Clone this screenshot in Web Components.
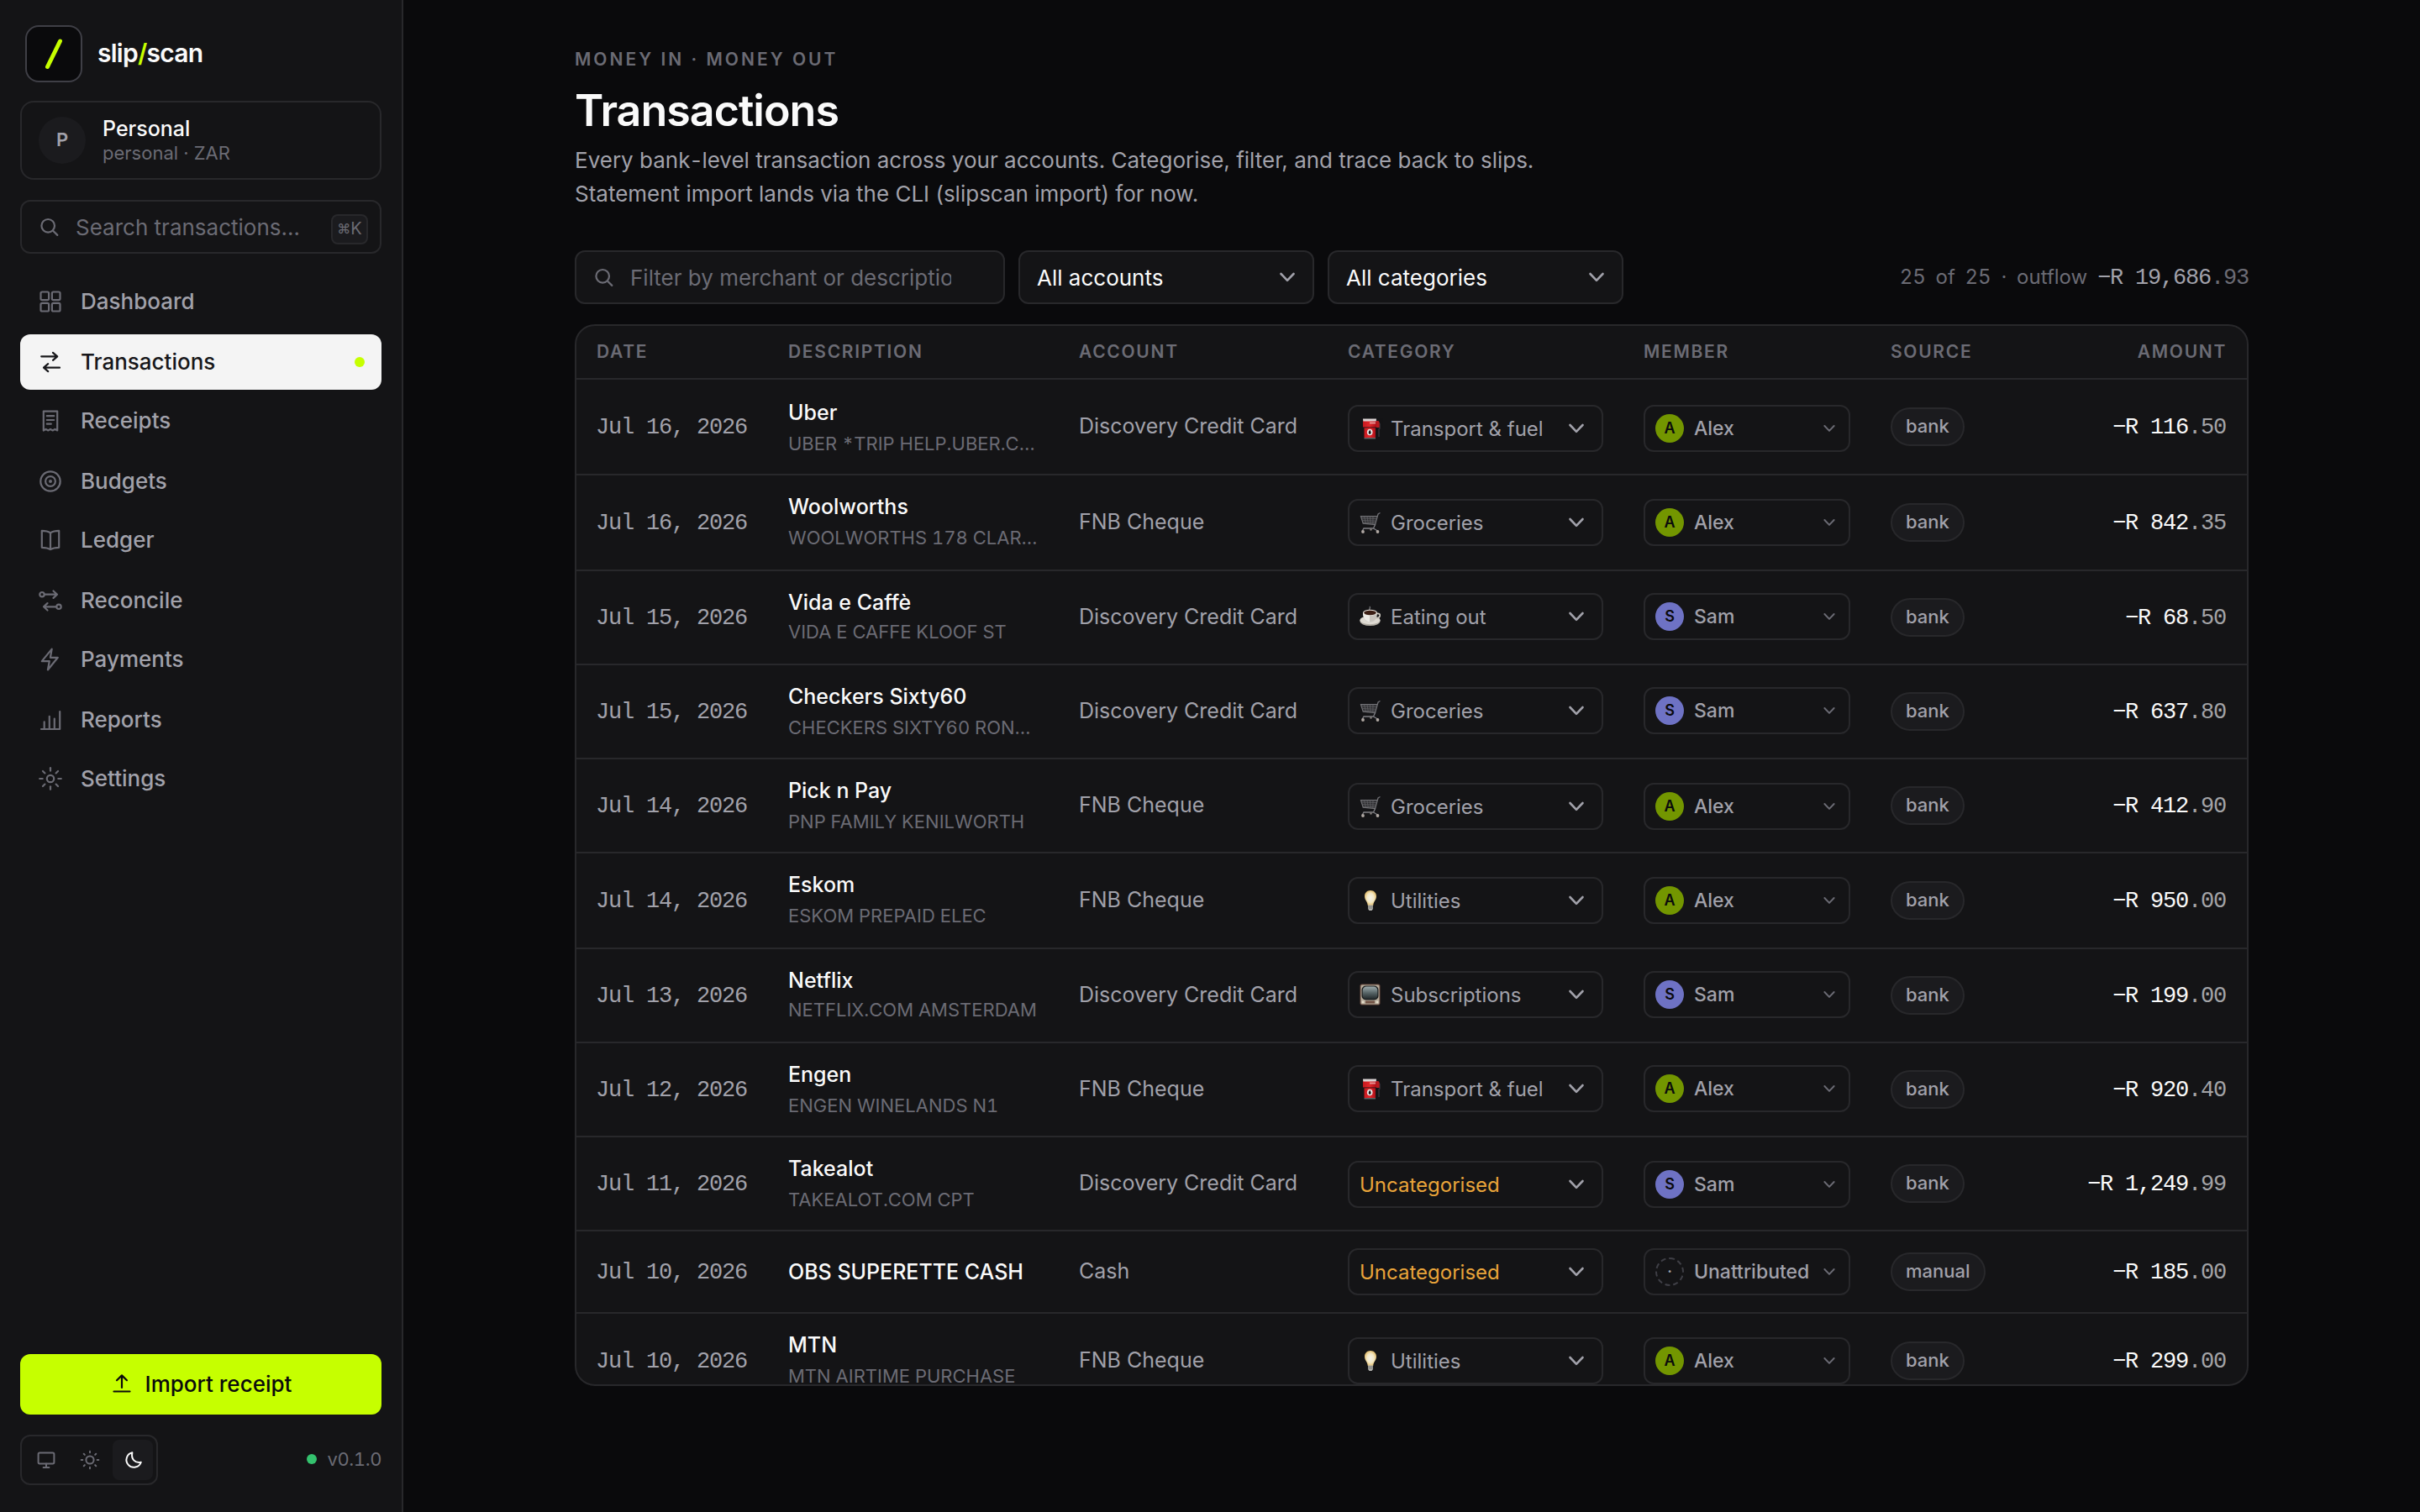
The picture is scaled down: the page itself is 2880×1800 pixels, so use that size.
<!DOCTYPE html>
<html lang="en">
<head>
<meta charset="utf-8">
<title>slip/scan - Transactions</title>
<style>
    html, body {
        margin: 0;
        height: 100%;
        background: #0a0a0c;
    }

    body {
        --bg: #0a0a0c;
        --panel: #141416;
        --raised: #1b1b1e;
        --line: #28282b;
        --text: #fafafa;
        --soft: #a1a1aa;
        --muted: #6b6b74;
        --accent: #c6ff00;
        --mono: "Liberation Mono", monospace;
        display: flex;
        font-family: Inter, "Liberation Sans", sans-serif;
        font-size: 26px;
        color: var(--text);
        overflow: hidden;
    }
</style>
</head>
<body>
<app-sidebar></app-sidebar>
<transactions-page></transactions-page>

<script>
const rays = (c, from, to) => [0, 45, 90, 135, 180, 225, 270, 315]
    .map(a => `<path d="M${c} ${c - from}V${c - to}" transform="rotate(${a} ${c} ${c})"/>`).join('');

const ICONS = {
    dashboard: '<rect x="4.5" y="4.5" width="9.6" height="9.6" rx="1.6"/><rect x="17.9" y="4.5" width="9.6" height="9.6" rx="1.6"/><rect x="4.5" y="17.9" width="9.6" height="9.6" rx="1.6"/><rect x="17.9" y="17.9" width="9.6" height="9.6" rx="1.6"/>',
    transactions: '<path d="M5.2 9.3h19M19 4.8l5.2 4.5-5.2 4.5M27 22.7H8M13.2 18.2 8 22.7l5.2 4.5"/>',
    receipts: '<path d="M7.8 27.5V4.6h16.4v22.9l-2.8-1.6-2.7 1.6-2.7-1.6-2.7 1.6-2.7-1.6zM11.8 10.2h8.4M11.8 15h8.4M11.8 19.7h5"/>',
    budgets: '<circle cx="16" cy="16" r="11.7"/><circle cx="16" cy="16" r="5.9"/><circle cx="16" cy="16" r="1.2" fill="currentColor" stroke-width="1.6"/>',
    ledger: '<path d="M16 7.4C13 5.4 9 4.9 5.8 4.9v19.9c4 0 7.2.4 10.2 2.4 3-2 6.2-2.4 10.2-2.4V4.9C23 4.9 19 5.4 16 7.4zM16 7.4v19.8"/>',
    reconcile: '<circle cx="6" cy="8.7" r="2.7"/><path d="M9.5 8.7H24M19.5 4.5l4.5 4.2-4.5 4.2M22.5 23.3H8M12.5 19.1 8 23.3l4.5 4.2"/><circle cx="26" cy="23.3" r="2.7"/>',
    payments: '<path d="M17.7 3.6 5.8 18.1h9L12.9 28.5 24.8 13.8h-8.9z"/>',
    reports: '<path d="M5 27h22.2V6.2M8.7 27v-8.6M14.8 27V11.8M20.8 27V14.6"/>',
    settings: `<circle cx="16" cy="16" r="4.2"/>${rays(16, 9.3, 12.8)}`,
    search: '<circle cx="13.2" cy="14.8" r="7.8"/><path d="m18.9 20.5 5.4 5.4"/>',
    upload: '<path d="M16 21V6.6M10 12.2l6-5.8 6 5.8M6.5 25.5h19"/>',
    screen: '<rect x="6.6" y="7.6" width="18.8" height="12.8" rx="1.6"/><path d="M16 20.4v4.4M12.6 25h6.8"/>',
    sun: `<circle cx="16" cy="16" r="4.6"/>${rays(16, 8.7, 10.3)}`,
    moon: '<path d="M14.4 7.2a8.9 8.9 0 1 0 10.4 11.5c-3.6.7-6.6-.2-8.6-2.4-2-2.2-2.6-5.4-1.8-9.1z"/>',
    chevron: '<path d="m8.5 12 7.5 7.8 7.5-7.8"/>'
};

// small full colour pictures in front of the category names
const EMOJI = {
    fuel: `<defs><linearGradient id="g"><stop offset="0" stop-color="#cf1a20"/><stop offset=".5" stop-color="#f0282d"/><stop offset="1" stop-color="#b50f18"/></linearGradient></defs>
        <path d="M21 5l3 2.5V13l-1 1v9" fill="none" stroke="#34343a" stroke-width="1.6"/>
        <path d="M20 4h2.5l1.2 2v6H20z" fill="#c01b20"/>
        <path d="M4 1.5h16l-.5 5h-15z" fill="#e6dfdf"/><path d="M4 4.5h16v7H4z" fill="url(#g)"/>
        <path d="M12 5.5h7v2h-7z" fill="#f09a9a"/><path d="M5.5 12.3H19V24H5.5z" fill="url(#g)"/>
        <ellipse cx="12.2" cy="17.5" rx="3.3" ry="3.8" fill="#f5f2f2"/><path d="M12.2 14.8c2.4 3.5 1.3 5 0 5s-2.4-1.5 0-5z" fill="#111"/>
        <path d="M5.5 24H19v1.5H5.5z" fill="#66666a"/>`,
    cart: `<path d="M24.5 1.5 22 3l-3.4 12.5-14.4-1.3L1.5 5.5l19.8.2" fill="#2d2d30" stroke="#77777b" stroke-width="1.2"/>
        <path d="M2.3 8l18.2.5M3.2 10.5l16.6.8M4 13l15 .7M5.5 5.5l2 9M9 5.5l1.3 9M12.5 5.5l.6 9M16 5.5l-.2 9.5" stroke="#66666a" stroke-width=".8" fill="none"/>
        <path d="M18.6 15.5 16.5 20H5l-2 3.5M16.5 20l5 3" stroke="#85858a" stroke-width="1.3" fill="none"/>
        <circle cx="4" cy="24" r="1.9" fill="#b9b0ab"/><circle cx="21.5" cy="24" r="1.9" fill="#b9b0ab"/><circle cx="13.5" cy="21.5" r="1.2" fill="#8c8682"/>`,
    coffee: `<path d="M12 6c-2-2 2-2.500 0-5" stroke="#77777b" stroke-width="1.4" fill="none"/>
        <ellipse cx="12.5" cy="18.5" rx="12" ry="5.5" fill="#b9b4aa"/><ellipse cx="12.5" cy="17.3" rx="12" ry="5" fill="#e9e5dd"/>
        <path d="M20.5 9.5c6-1 4.5 6-1.5 5.5" stroke="#d8d3c9" stroke-width="1.7" fill="none"/>
        <path d="M4 8.5h17c0 6.5-3 11-8.500 11S4 15 4 8.5z" fill="#d2cec6"/><path d="M4 8.5h8v11C7 19 4 14 4 8.5z" fill="#f8f6f1"/>
        <ellipse cx="12.5" cy="8.3" rx="8.5" ry="3.6" fill="#f3efe8"/><ellipse cx="12.5" cy="8.5" rx="7.2" ry="2.7" fill="#3e1f14"/>`,
    bulb: `<defs><radialGradient id="b"><stop offset="0" stop-color="#fffef5"/><stop offset=".6" stop-color="#fff4cf"/><stop offset="1" stop-color="#efc977"/></radialGradient></defs>
        <path d="M13 1c4 0 7 2.8 7 6.9 0 4.5-3.4 6-3.8 11H9.8C9.4 13.9 6 12.4 6 7.9 6 3.800 9 1 13 1z" fill="url(#b)"/>
        <path d="M10 18.5h6V23l-1.5 2h-3L10 23z" fill="#b9b9b5"/><path d="M10 20h6M10 22h6" stroke="#6d6d6a" stroke-width=".8"/>`,
    tv: `<defs><linearGradient id="t" x2="0" y2="1"><stop offset="0" stop-color="#a4b4b6"/><stop offset=".5" stop-color="#5c6a6c"/><stop offset="1" stop-color="#22292b"/></linearGradient></defs>
        <rect x=".5" y=".5" width="24" height="25" rx="2" fill="#6e4e42"/><rect x="1.5" y="1.5" width="22" height="23" rx="1.5" fill="#c0b6a4"/>
        <rect x="2.5" y="2.5" width="20" height="17" rx="5" fill="#1a1d1e"/><rect x="3.7" y="3.5" width="17.6" height="15" rx="4.5" fill="url(#t)"/>
        <path d="M7 22h11" stroke="#765647" stroke-width="3"/><circle cx="4" cy="22" r="1.4" fill="#f4ead6"/><circle cx="21" cy="22" r="1.4" fill="#f4ead6"/>`
};

class UiIcon extends HTMLElement {
    constructor() {
        super();
        this.attachShadow({ mode: 'open' });
    }

    connectedCallback() {
        this.shadowRoot.innerHTML = `
            <style>
                :host { display: block; flex: none; width: 32px; height: 32px; }
                svg { display: block; width: 100%; height: 100%; fill: none; stroke: currentColor; stroke-width: var(--stroke, 2.2); stroke-linecap: round; stroke-linejoin: round; }
            </style>
            <svg viewBox="0 0 32 32">${ICONS[this.getAttribute('name')]}</svg>
        `;
    }
}
customElements.define('ui-icon', UiIcon);

class UiEmoji extends HTMLElement {
    constructor() {
        super();
        this.attachShadow({ mode: 'open' });
    }

    connectedCallback() {
        this.shadowRoot.innerHTML = `
            <style>
                :host { display: block; flex: none; width: 25px; height: 26px; opacity: .95; }
                svg { display: block; }
            </style>
            <svg width="25" height="26" viewBox="0 0 25 26">${EMOJI[this.getAttribute('name')]}</svg>
        `;
    }
}
customElements.define('ui-emoji', UiEmoji);

class NavItem extends HTMLElement {
    constructor() {
        super();
        this.attachShadow({ mode: 'open' });
    }

    connectedCallback() {
        this.shadowRoot.innerHTML = `
            <style>
                :host {
                    display: flex;
                    align-items: center;
                    box-sizing: border-box;
                    height: 66px;
                    padding: 0 20px;
                    border-radius: 12px;
                    color: var(--soft);
                    font-weight: 500;
                }
                :host([active]) { background: #f4f4f4; color: #18181b; }
                ui-icon { color: var(--muted); margin-right: 20px; }
                :host([active]) ui-icon { color: inherit; }
                span { flex: 1; line-height: 32px; }
                i { display: none; width: 12px; height: 12px; border-radius: 50%; background: var(--accent); }
                :host([active]) i { display: block; }
            </style>
            <ui-icon name="${this.getAttribute('icon')}"></ui-icon>
            <span><slot></slot></span>
            <i></i>
        `;
    }
}
customElements.define('nav-item', NavItem);

class AppSidebar extends HTMLElement {
    constructor() {
        super();
        const shadow = this.attachShadow({ mode: 'open' });

        shadow.innerHTML = `
            <style>
                :host {
                    display: flex;
                    flex-direction: column;
                    box-sizing: border-box;
                    flex: none;
                    width: 480px;
                    height: 1800px;
                    padding: 30px 24px 32px;
                    border-right: 2px solid var(--line);
                    background: var(--panel);
                }
                .brand { display: flex; align-items: center; gap: 18px; padding-left: 6px; font-size: 30px; font-weight: 600; letter-spacing: -.75px; }
                .brand svg { display: block; box-sizing: border-box; width: 68px; height: 68px; border: 2px solid #3f3f46; border-radius: 16px; background: var(--bg); }
                .brand b { font-weight: 600; color: var(--accent); }
                .brand span { margin-bottom: 2px; }
                .workspace { display: flex; align-items: center; box-sizing: border-box; height: 94px; margin-top: 22px; padding: 0 20px; border: 2px solid var(--line); border-radius: 16px; }
                .avatar { width: 56px; height: 56px; margin-right: 20px; border-radius: 50%; background: var(--raised); color: var(--soft); font-size: 22px; font-weight: 600; line-height: 54px; text-align: center; }
                .name { font-weight: 500; line-height: 32px; font-size: 25px; }
                .meta { margin-bottom: 2px; font-size: 22px; line-height: 26px; color: var(--muted); }
                .search { display: flex; align-items: center; box-sizing: border-box; height: 64px; margin-top: 24px; padding: 0 14px 0 18px; border: 2px solid var(--line); border-radius: 12px; color: var(--muted); }
                .search ui-icon { margin-right: 14px; }
                .search span { flex: 1; }
                kbd { box-sizing: border-box; width: 44px; height: 36px; margin-top: 6px; border: 2px solid var(--line); border-radius: 8px; background: var(--raised); font: 20px/31px Inter, "DejaVu Sans", sans-serif; text-align: center; }
                kbd small { font-size: 16px; vertical-align: 1px; }
                nav { margin-top: 24px; }
                nav-item { margin-bottom: 4px; }
                nav-item:nth-child(odd) { margin-bottom: 6px; }
                .import { display: flex; align-items: center; justify-content: center; gap: 12px; box-sizing: border-box; height: 72px; margin-top: auto; padding: 0 2px 2px 0; border-radius: 12px; background: var(--accent); color: #0a0a0c; font-weight: 500; }
                .foot { display: flex; align-items: center; justify-content: space-between; margin-top: 24px; }
                .theme { display: flex; gap: 4px; padding: 4px; border: 2px solid var(--line); border-radius: 12px; color: var(--muted); }
                .theme ui-icon { box-sizing: border-box; width: 48px; height: 48px; padding: 8px 7px 8px 9px; border-radius: 8px; --stroke: 2; }
                .theme .on { background: var(--raised); color: var(--text); }
                .version { display: flex; align-items: center; gap: 12px; margin-top: -2px; font-size: 22px; letter-spacing: -.4px; color: var(--muted); font-feature-settings: "tnum"; }
                .version i { width: 12px; height: 12px; border-radius: 50%; background: #34c26e; }
            </style>

            <div class="brand">
                <svg viewBox="0 0 64 64"><path d="M24.5 47.5 39.5 17" stroke="#c6ff00" stroke-width="5" stroke-linecap="round"/></svg>
                <span>slip<b>/</b>scan</span>
            </div>
            <div class="workspace">
                <div class="avatar">P</div>
                <div>
                    <div class="name">Personal</div>
                    <div class="meta">personal · ZAR</div>
                </div>
            </div>
            <div class="search"><ui-icon name="search"></ui-icon><span>Search transactions…</span><kbd><small>⌘</small>K</kbd></div>
            <nav>
                <nav-item icon="dashboard">Dashboard</nav-item>
                <nav-item icon="transactions" active>Transactions</nav-item>
                <nav-item icon="receipts">Receipts</nav-item>
                <nav-item icon="budgets">Budgets</nav-item>
                <nav-item icon="ledger">Ledger</nav-item>
                <nav-item icon="reconcile">Reconcile</nav-item>
                <nav-item icon="payments">Payments</nav-item>
                <nav-item icon="reports">Reports</nav-item>
                <nav-item icon="settings">Settings</nav-item>
            </nav>
            <div class="import"><ui-icon name="upload"></ui-icon>Import receipt</div>
            <div class="foot">
                <div class="theme"><ui-icon name="screen"></ui-icon><ui-icon name="sun"></ui-icon><ui-icon class="on" name="moon"></ui-icon></div>
                <div class="version"><i></i>v0.1.0</div>
            </div>
        `;
    }
}
customElements.define('app-sidebar', AppSidebar);

class SelectBox extends HTMLElement {
    constructor() {
        super();
        const shadow = this.attachShadow({ mode: 'open' });

        shadow.innerHTML = `
            <style>
                :host { display: flex; align-items: center; box-sizing: border-box; border: 2px solid var(--line); border-radius: 12px; white-space: nowrap; }
                div { display: flex; align-items: center; flex: 1; }
                ui-icon { color: var(--soft); --stroke: 2.6; }
            </style>
            <div><slot></slot></div>
            <ui-icon part="chevron" name="chevron"></ui-icon>
        `;
    }
}
customElements.define('select-box', SelectBox);

class TransactionRow extends HTMLElement {
    constructor() {
        super();
        this.attachShadow({ mode: 'open' });
    }

    set data([date, name, memo, account, emoji, category, member, source, whole, cents]) {
        const who = member === 'Unattributed' ? 'none' : member.toLowerCase();
        this.shadowRoot.innerHTML = `
            <style>
                :host {
                    display: grid;
                    grid-template-columns: var(--columns);
                    box-sizing: border-box;
                    flex: none;
                    height: var(--h, 112px);
                    border-bottom: 2px solid var(--line);
                    font-size: 24px;
                    color: var(--soft);
                }
                :host > div { padding: 0 24px; min-width: 0; }
                :host > .mid { display: flex; align-items: center; padding-bottom: 2px; }
                :host > .num { padding: 2px 25px 0 23px; font-family: var(--mono); font-size: 27px; letter-spacing: -1.2px; white-space: pre; }
                .title { margin-top: var(--name, 21px); font-size: 25px; font-weight: 500; line-height: 32px; color: var(--text); white-space: nowrap; }
                .memo { margin-top: var(--memo, 5px); font-size: 22px; line-height: 32px; color: var(--muted); white-space: nowrap; font-feature-settings: "tnum"; }
                .account { font-size: 25px; }
                select-box { height: 56px; margin-top: var(--ctl, 26px); }
                .category { padding: 0 6px 0 12px; }
                .category::part(chevron) { margin-right: 8px; }
                ui-emoji { margin-right: 12px; }
                .category.open { color: #e9a43a; }
                .member { padding: 0 11px 0 12px; font-size: 23px; font-weight: 500; }
                .member::part(chevron) { width: 24px; height: 24px; color: var(--muted); }
                .who { box-sizing: border-box; width: 34px; height: 34px; margin-right: 12px; border-radius: 50%; color: #0a0a0c; font-size: 18px; font-weight: 600; line-height: 34px; text-align: center; }
                .alex { background: #739600; }
                .sam { background: #6e72c4; }
                .none { border: 2px dashed #3f3f46; color: var(--soft); line-height: 30px; }
                .badge { height: 42px; margin-top: 2px; padding: 0 16px; border: 2px solid var(--line); border-radius: 23px; background: var(--raised); font-size: 22px; font-weight: 500; line-height: 41px; }
                .amount { justify-content: flex-end; color: var(--text); }
                .amount span { color: #a3a3a6; }
            </style>
            <div class="mid num">${date}</div>
            <div><div class="title">${name}</div>${memo ? `<div class="memo">${memo}</div>` : ''}</div>
            <div class="mid account">${account}</div>
            <div><select-box class="category ${emoji ? '' : 'open'}">${emoji ? `<ui-emoji name="${emoji}"></ui-emoji>` : ''}${category}</select-box></div>
            <div><select-box class="member"><div class="who ${who}">${who === 'none' ? '·' : member[0]}</div>${member}</select-box></div>
            <div class="mid"><div class="badge">${source}</div></div>
            <div class="mid amount num">−R ${whole}<span>.${cents}</span></div>
        `;
    }
}
customElements.define('transaction-row', TransactionRow);

const TRANSACTIONS = [
    ['Jul 16, 2026', 'Uber', 'UBER *TRIP HELP.UBER.C…', 'Discovery Credit Card', 'fuel', 'Transport &amp; fuel', 'Alex', 'bank', '116', '50'],
    ['Jul 16, 2026', 'Woolworths', 'WOOLWORTHS 178 CLAR…', 'FNB Cheque', 'cart', 'Groceries', 'Alex', 'bank', '842', '35'],
    ['Jul 15, 2026', 'Vida e Caffè', 'VIDA E CAFFE KLOOF ST', 'Discovery Credit Card', 'coffee', 'Eating out', 'Sam', 'bank', '68', '50'],
    ['Jul 15, 2026', 'Checkers Sixty60', 'CHECKERS SIXTY60 RON…', 'Discovery Credit Card', 'cart', 'Groceries', 'Sam', 'bank', '637', '80'],
    ['Jul 14, 2026', 'Pick n Pay', 'PNP FAMILY KENILWORTH', 'FNB Cheque', 'cart', 'Groceries', 'Alex', 'bank', '412', '90'],
    ['Jul 14, 2026', 'Eskom', 'ESKOM PREPAID ELEC', 'FNB Cheque', 'bulb', 'Utilities', 'Alex', 'bank', '950', '00'],
    ['Jul 13, 2026', 'Netflix', 'NETFLIX.COM AMSTERDAM', 'Discovery Credit Card', 'tv', 'Subscriptions', 'Sam', 'bank', '199', '00'],
    ['Jul 12, 2026', 'Engen', 'ENGEN WINELANDS N1', 'FNB Cheque', 'fuel', 'Transport &amp; fuel', 'Alex', 'bank', '920', '40'],
    ['Jul 11, 2026', 'Takealot', 'TAKEALOT.COM CPT', 'Discovery Credit Card', '', 'Uncategorised', 'Sam', 'bank', '1,249', '99'],
    ['Jul 10, 2026', 'OBS SUPERETTE CASH', '', 'Cash', '', 'Uncategorised', 'Unattributed', 'manual', '185', '00'],
    ['Jul 10, 2026', 'MTN', 'MTN AIRTIME PURCHASE', 'FNB Cheque', 'bulb', 'Utilities', 'Alex', 'bank', '299', '00']
];

class TransactionTable extends HTMLElement {
    constructor() {
        super();
        const shadow = this.attachShadow({ mode: 'open' });

        shadow.innerHTML = `
            <style>
                :host {
                    --columns: 228px 346px 320px 352px 294px 1fr 240px;
                    display: flex;
                    flex-direction: column;
                    box-sizing: border-box;
                    height: 1264px;
                    border: 2px solid var(--line);
                    border-radius: 24px;
                    background: var(--panel);
                    overflow: hidden;
                }
                header {
                    display: grid;
                    grid-template-columns: var(--columns);
                    flex: none;
                    height: 62px;
                    border-bottom: 2px solid var(--line);
                    font-size: 21px;
                    font-weight: 600;
                    letter-spacing: 1.7px;
                    line-height: 62px;
                    color: var(--muted);
                }
                header span { padding: 0 24px; }
                header span:last-child { text-align: right; }
                transaction-row:nth-of-type(1), transaction-row:nth-of-type(2), transaction-row:nth-of-type(6), transaction-row:nth-of-type(11) { --h: 114px; --ctl: 28px; }
                transaction-row:nth-of-type(1) { --ctl: 30px; --name: 23px; }
                transaction-row:nth-of-type(5), transaction-row:nth-of-type(9) { --ctl: 28px; }
                transaction-row:nth-of-type(3), transaction-row:nth-of-type(7) { --memo: 3px; }
                transaction-row:nth-of-type(10) { --h: 98px; --ctl: 20px; --name: 32px; }
            </style>
            <header><span>DATE</span><span>DESCRIPTION</span><span>ACCOUNT</span><span>CATEGORY</span><span>MEMBER</span><span>SOURCE</span><span>AMOUNT</span></header>
        `;

        for (const item of TRANSACTIONS) {
            const row = document.createElement('transaction-row');
            row.data = item;
            shadow.append(row);
        }
    }
}
customElements.define('transaction-table', TransactionTable);

class TransactionsPage extends HTMLElement {
    constructor() {
        super();
        const shadow = this.attachShadow({ mode: 'open' });

        shadow.innerHTML = `
            <style>
                :host { display: block; box-sizing: border-box; flex: 1; height: 1800px; padding: 55px 204px 0; }
                .eyebrow { font-size: 21px; font-weight: 600; letter-spacing: 3px; line-height: 32px; color: var(--muted); }
                h1 { margin: 14px 0 0; font-size: 52px; font-weight: 600; letter-spacing: -1px; line-height: 62px; }
                p { margin: 8px 0 0; line-height: 40px; color: var(--soft); }
                p i { font-style: normal; padding: 0 1px; }
                .filters { display: flex; align-items: center; gap: 16px; height: 64px; margin: 47px 0 24px; }
                .filter, .filters select-box { box-sizing: border-box; height: 64px; border: 2px solid var(--line); border-radius: 12px; background: var(--panel); }
                .filter { display: flex; align-items: center; width: 512px; padding: 0 62px 0 18px; color: var(--muted); }
                .filter ui-icon { margin-right: 13px; }
                .filter span { flex: 1; overflow: hidden; white-space: nowrap; text-indent: 1px; }
                .filters select-box { width: 352px; padding: 0 14px 0 20px; }
                .total { display: flex; align-items: baseline; margin-left: auto; font-size: 24px; color: var(--muted); white-space: pre; }
                .count { font-feature-settings: "tnum"; word-spacing: 5.3px; }
                .sum { font-family: var(--mono); font-size: 27px; letter-spacing: -1.2px; }
                .sum b { font-weight: 400; color: var(--soft); }
            </style>
            <div class="eyebrow">MONEY IN · MONEY OUT</div>
            <h1>Transactions</h1>
            <p>Every bank<i>-</i>level transaction across your accounts. Categorise, filter, and trace back to slips.<br>Statement import lands via the CLI (slipscan import) for now.</p>
            <div class="filters">
                <div class="filter"><ui-icon name="search"></ui-icon><span>Filter by merchant or description</span></div>
                <select-box>All accounts</select-box>
                <select-box>All categories</select-box>
                <div class="total"><span class="count">25 of 25 · outflow </span><span class="sum"><b>−R 19,686</b>.93</span></div>
            </div>
            <transaction-table></transaction-table>
        `;
    }
}
customElements.define('transactions-page', TransactionsPage);
</script>
</body>
</html>
